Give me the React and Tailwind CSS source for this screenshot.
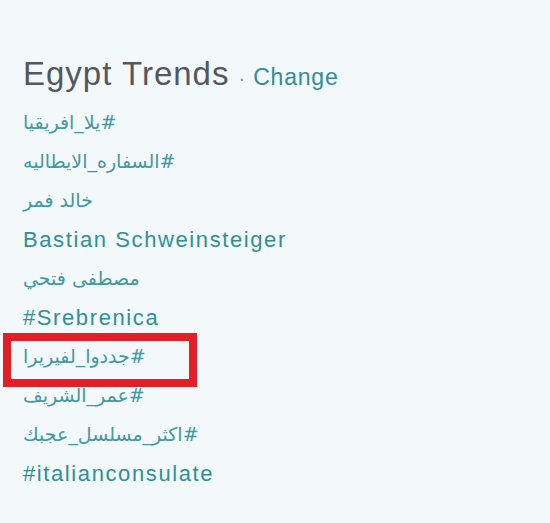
export default function App() {
  const trends = [
    { text: '#يلا_افريقيا', rtl: true },
    { text: '#السفاره_الايطاليه', rtl: true },
    { text: 'خالد فمر', rtl: true },
    { text: 'Bastian Schweinsteiger' },
    { text: 'مصطفى فتحي', rtl: true },
    { text: '#Srebrenica' },
    { text: '#جددوا_لفيريرا', rtl: true, marked: true },
    { text: '#عمر_الشريف', rtl: true },
    { text: '#اكثر_مسلسل_عجبك', rtl: true },
    { text: '#italianconsulate' },
  ]

  return (
    <div className="w-[550px] h-[523px] bg-[#f3f8fb] pl-[23px] pt-[54px] overflow-hidden font-['Liberation_Sans','DejaVu_Sans',sans-serif]">
      {/* header */}
      <div className="flex items-baseline h-[40px] leading-[40px]">
        <h2 className="text-[33px] tracking-[1px] text-[#52585e]">Egypt Trends</h2>
        <span className="text-[20px] text-[#8a9096] ml-[9px] mr-[8px]">·</span>
        <a className="text-[23px] tracking-[0.8px] text-[#2f8f97]">Change</a>
      </div>

      {/* trends */}
      <ul className="mt-[9px]">
        {trends.map((t, i) => (
          <li key={i} className="relative h-[39px] leading-[39px] text-[#2f8f97]">
            {t.rtl ? (
              <span dir="rtl" className="inline-block text-[19px] font-['DejaVu_Sans',sans-serif] opacity-90">
                {t.text}
              </span>
            ) : (
              <span className="text-[22px] tracking-[1.6px]">{t.text}</span>
            )}
            {t.marked && (
              <div className="absolute left-[-20px] top-[-4px] w-[194px] h-[54px] border-[8px] border-[#e31e24]" />
            )}
          </li>
        ))}
      </ul>
    </div>
  )
}
